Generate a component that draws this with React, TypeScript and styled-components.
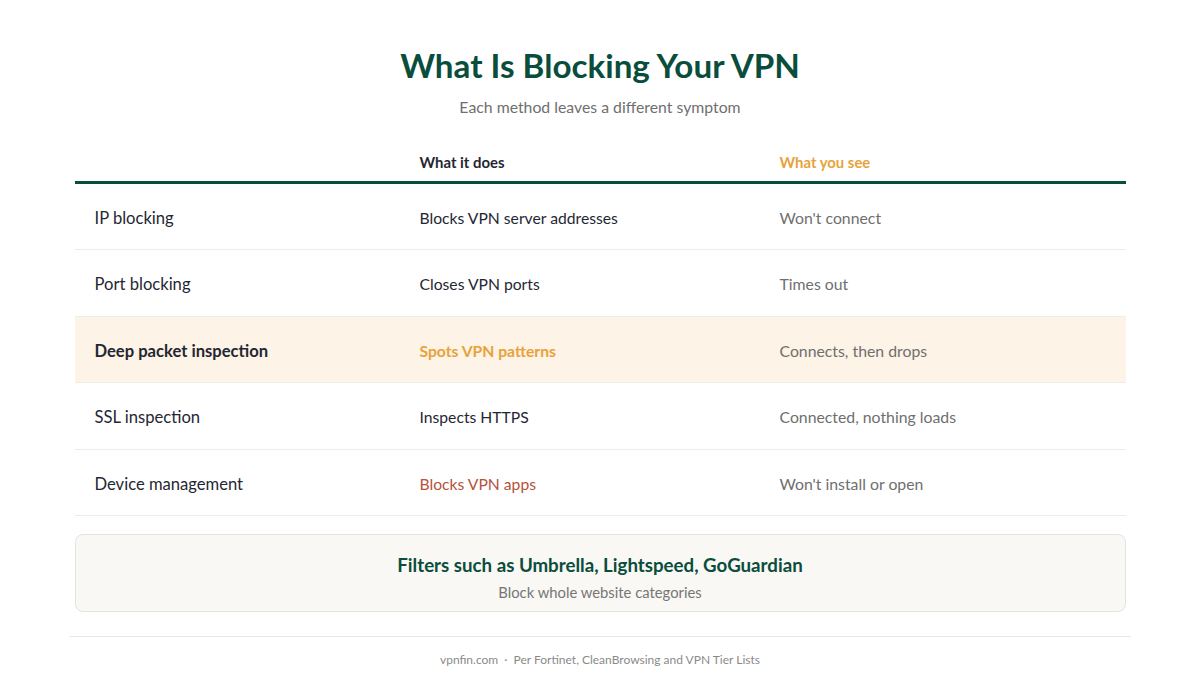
import React from "react";
import styled, { createGlobalStyle } from "styled-components";

const Global = createGlobalStyle`
  html, body { margin: 0; padding: 0; background: #ffffff; }
  body { font-family: Lato, "Open Sans", "Liberation Sans", sans-serif; }
`;

const Page = styled.div`
  width: 1061px;
  margin: 0 auto;
  padding-top: 45px;
  display: flex;
  flex-direction: column;
  align-items: stretch;
`;

const Title = styled.h1`
  margin: 0;
  text-align: center;
  font-size: 33.2px;
  line-height: 40px;
  font-weight: 700;
  color: #0b4d3c;
`;

const Subtitle = styled.p`
  margin: 12px 0 0;
  text-align: center;
  font-size: 15.8px;
  line-height: 20px;
  color: #6f6f6f;
`;

const Table = styled.div`
  margin: 25px 5px 0;
  display: grid;
  grid-template-columns: 325px 360px 1fr;
`;

const HeadCell = styled.div<{ $tone?: "dark" | "accent" }>`
  padding: 10px 20px 9px;
  font-size: 14.9px;
  line-height: 20px;
  font-weight: 700;
  color: ${(p) => (p.$tone === "accent" ? "#e8a23a" : "#1f2733")};
  border-bottom: 3px solid #0b4d3c;
`;

const Cell = styled.div<{ $hl?: boolean; $bold?: boolean; $color: string; $size: number }>`
  height: 66.4px;
  box-sizing: border-box;
  padding: 23px 20px 0;
  font-size: ${(p) => p.$size}px;
  line-height: 22px;
  font-weight: ${(p) => (p.$bold ? 700 : 400)};
  color: ${(p) => p.$color};
  background: ${(p) => (p.$hl ? "#fdf3e6" : "transparent")};
  border-bottom: 1px solid #ececec;
`;

const Callout = styled.div`
  margin: 18px 5px 0;
  height: 78px;
  box-sizing: border-box;
  background: #f9f8f4;
  border: 1px solid #e4e4dd;
  border-radius: 8px;
  padding: 18px 20px 0;
  text-align: center;
`;

const CalloutTitle = styled.div`
  font-size: 18.7px;
  line-height: 24px;
  font-weight: 700;
  color: #0b4d3c;
`;

const CalloutText = styled.div`
  margin-top: 5px;
  font-size: 14.8px;
  line-height: 20px;
  color: #767676;
`;

const Footer = styled.div`
  margin-top: 24px;
  border-top: 1px solid #e6e6e6;
  padding-top: 15px;
  text-align: center;
  font-size: 12px;
  line-height: 16px;
  color: #8a8a8a;
`;

type Row = {
  method: string;
  does: string;
  see: string;
  hl?: boolean;
  doesColor?: string;
};

const rows: Row[] = [
  { method: "IP blocking", does: "Blocks VPN server addresses", see: "Won't connect" },
  { method: "Port blocking", does: "Closes VPN ports", see: "Times out" },
  { method: "Deep packet inspection", does: "Spots VPN patterns", see: "Connects, then drops", hl: true, doesColor: "#e8a23a" },
  { method: "SSL inspection", does: "Inspects HTTPS", see: "Connected, nothing loads" },
  { method: "Device management", does: "Blocks VPN apps", see: "Won't install or open", doesColor: "#b5533c" },
];

export default function App() {
  return (
    <>
      <Global />
      <Page>
        <Title>What Is Blocking Your VPN</Title>
        <Subtitle>Each method leaves a different symptom</Subtitle>
        <Table>
          <HeadCell />
          <HeadCell>What it does</HeadCell>
          <HeadCell $tone="accent">What you see</HeadCell>
          {rows.map((r) => (
            <React.Fragment key={r.method}>
              <Cell $hl={r.hl} $bold={r.hl} $color="#1f2733" $size={16.6}>{r.method}</Cell>
              <Cell $hl={r.hl} $bold={r.hl} $color={r.doesColor ?? "#1f2733"} $size={15.7}>{r.does}</Cell>
              <Cell $hl={r.hl} $color="#6f6f6f" $size={15.8}>{r.see}</Cell>
            </React.Fragment>
          ))}
        </Table>
        <Callout>
          <CalloutTitle>Filters such as Umbrella, Lightspeed, GoGuardian</CalloutTitle>
          <CalloutText>Block whole website categories</CalloutText>
        </Callout>
        <Footer>vpnfin.com &nbsp;·&nbsp; Per Fortinet, CleanBrowsing and VPN Tier Lists</Footer>
      </Page>
    </>
  );
}
